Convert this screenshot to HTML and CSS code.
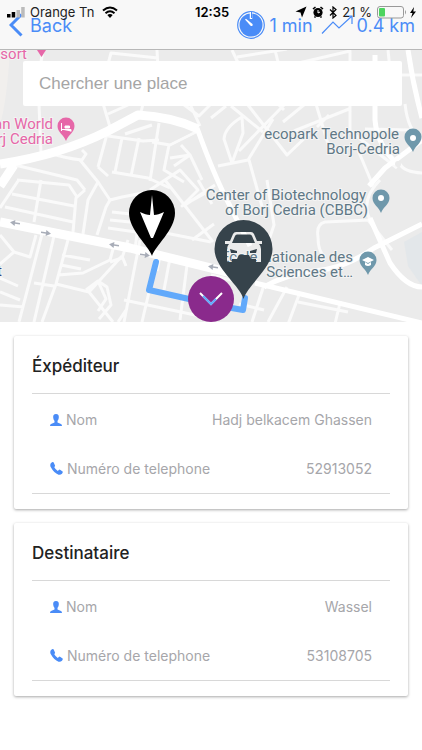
FILE: index.html
```html
<!DOCTYPE html>
<html lang="fr">
<head>
<meta charset="utf-8">
<meta name="viewport" content="width=device-width, initial-scale=1">
<title>Course</title>
<link rel="stylesheet" href="styles.css">
</head>
<body>
<header class="topbar">
  <div class="status">
    <div class="status-left">
      <svg width="18" height="11" viewBox="0 0 18 11"><path d="M0 7h3.500v3.500H0zM4.700 5h3.500v5.500H4.700z"/><path d="M9.500 3H13v7.500H9.500zM14.200 0h3.500v10.500h-3.500z" fill="#bbb"/></svg>
      <span>Orange Tn</span>
      <svg class="wifi" width="16" height="12" viewBox="0 0 16 12" fill="none" stroke="#000" stroke-width="2"><path d="M1 4.500Q8-1.500 15 4.500M3.500 7.200Q8 3.400 12.500 7.200"/><path d="M5.300 9Q8 6.800 10.700 9L8 12z" fill="#000" stroke="none"/></svg>
    </div>
    <strong class="clock">12:35</strong>
    <div class="status-right">
      <svg width="12" height="12" viewBox="0 0 12 12"><path d="M11.500 .5L7 11.500 5.500 6.500 .5 5.500z"/></svg>
      <svg width="12" height="12" viewBox="0 0 12 12"><circle cx="6" cy="6.500" r="4.600"/><path d="M1 3l2.500-2M11 3L8.500 1M2.500 11.500l1-1M9.500 11.500l-1-1" stroke="#000" stroke-width="1.600"/><path d="M6 4v3l2-1" fill="none" stroke="#fff"/></svg>
      <svg width="8" height="13" viewBox="0 0 8 13" fill="none" stroke="#000" stroke-width="1.200"><path d="M1 3.500l6 6L4 12V1l3 2.500-6 6"/></svg>
      <span>21 %</span>
      <svg width="40" height="13" viewBox="0 0 40 13"><rect x=".5" y=".5" width="26" height="11.500" rx="2.500" fill="none" stroke="#999"/><path d="M28 4q2 2.200 0 4.500z" fill="#999"/><rect x="2" y="2" width="6" height="8.500" rx="1" fill="#4cd45f"/><path d="M37 1l-4 6h2.500l-1.500 5 5-6.500h-2.700z"/></svg>
    </div>
  </div>
  <nav class="nav">
    <a class="back" href="#"><svg width="14" height="24" viewBox="0 0 14 24"><path d="M12.500 1.500L2 12l10.500 10.500" fill="none" stroke="#4a8cf7" stroke-width="3"/></svg>Back</a>
    <div class="trip">
      <svg width="28" height="28" viewBox="0 0 28 28"><circle cx="14" cy="14" r="13.300" fill="none" stroke="#4a8cf7" stroke-width="1.200"/><circle cx="14" cy="14" r="11.500" fill="#4a8cf7"/><path d="M14 1v7" stroke="#fff" stroke-width="2.500"/><path d="M14.500 1v6" stroke="#4a8cf7"/><path d="M8 8.500l1-.8 6.500 5.300q.8 2.200-1.700 2z" fill="#fff"/></svg>
      <span>1 min</span>
      <svg class="trend" width="32" height="20" viewBox="0 0 32 20" fill="none" stroke="#4a8cf7" stroke-width="1.200"><path d="M1 18.500L12 7l6 6L31 1M25 1h6v8"/></svg>
      <span>0.4 km</span>
    </div>
  </nav>
</header>

<main>
  <section class="map">
    <svg class="map-canvas" viewBox="0 50 422 272" preserveAspectRatio="xMidYMid slice">
      <defs>
        <path id="pin" d="M0 0C-2-6-8.500-8.500-8.500-15A8.500 8.500 0 0 1 8.500-15C8.500-8.500 2-6 0 0z"/>
        <path id="arrow" d="M-5-.7h5V-3l5 3-5 3V.7h-5z" fill="#a8adb8"/>
        <!-- the car is cut out of its pin, the map shows through -->
        <mask id="car">
          <rect x="210" y="215" width="70" height="90" fill="#fff"/>
          <path d="M225 241h5l3-7q1-2 3-2h15q2 0 3 2l3 7h5v3h-3q2 2 2 5v13h-5v-3h-24v3h-5v-13q0-3 2-5h-4z" fill="#000"/>
          <path d="M232 243l3-7q.5-1.500 2-1.500h13q1.500 0 2 1.500l3 7zM230 249l7 2v2h-6zM257 249l-7 2v2h6zM237 259l2-4h10l2 4z" fill="#fff"/>
        </mask>
      </defs>
      <rect y="50" width="422" height="273" fill="#ebebeb"/>
      <path d="M0 50h10q-3 50-10 75z" fill="#f1efed"/>
      <path d="M422 232l-18 10 4 24 14 20z" fill="#e3e7ea"/>
      <g class="roads minor">
        <path d="M43 50L38 80 41 153M107 68l4-15 47 5M157 50l1 20M102 100l8 27M143 104l-3 12M108 114l20-9M183 104l16 12 12-12M190 104l10 22"/>
        <path d="M125 134l27-9M107 134l-9 33M82 150l4 4-4 6q-18-2-32-7M159 123l-9 58M122 138l-7 34M139 138l-8 38M108 136l35 5 16-1M98 167l10 9M112 172l36 6 22 10"/>
        <path d="M169 145l-5 25 20 12M170 158l20-3-9-10M174 166l16-11 12 25M152 142l18 3 28-14"/>
        <path d="M15 165l62 15 8 10M0 184l13-17M17 180l52 5 8 12M0 208l18-27M12 194l62 12M5 207l68 15M41 180l-7 42M85 190l-9 8-3 34M80 160l18 22-10 18-5 34"/>
        <path d="M98 182l12 18 12-3 26-5M110 200l-4 7-9 28M112 212l28 3M110 220l30 3M108 228l28 4M141 200l-6 50"/>
        <path d="M0 235l14 17 16 5 6-22M14 252L0 264M42 234L19 322M54 236L34 322M68 240l-12 44-14 38M34 283l20 3M56 284l33 8 24 30M62 255l28 5M61 265l20 4M58 275l25-2 27-13 5-18M110 262l12-4 6-18M122 256l4 10M0 278l18 8M0 292l20 8M0 305l24 2"/>
        <path d="M140 240l-16 82M124 300l90 19M122 256l-33 36M98 281l8 18-8 12M86 290l12-9 9 6 4 18-12 14M118 322l8-12M149 292l-7 30M170 258l-6 32M160 256l-3 15M187 265l-7 55M140 228l71 14"/>
        <path d="M165 180l48 62M150 190l30-20 18 20-16 16 29-16M192 240l22-16M185 205l30-20M198 180l14 24"/>
        <path d="M232 50l8 17M237 57l50-8M275 50l5 20M290 65l60-14v12M231 106l32 26M248 105l39 50 22-21M285 104l-46 47M305 104l-22 18M316 104l15 50M349 109l-55 22M317 127l12-12M350 104v30M211 118l15-12M278 104l6 6"/>
        <path d="M242 117q-17 10-18 22l8 24 11-30zM218 166l30-6 25-41M249 160l14 50M358 150l16 38M349 130l48 38M411 130l-46-1M405 104q3 28 17 35M401 75h21M388 50l3 30M400 164q4 8 22 9"/>
        <path d="M267 180l7 45-5 15M370 220l-45 2q-9 2-7 15 0 15 7 20M370 220q-10-20 10-40M264 285l-12 37M287 287l-19 35M299 295l-12 32M340 303l-6 25M298 302l50 10M264 310l-25-6M340 303l82 20M211 275l40 10M392 250l-24-30"/>
      </g>
      <g class="roads medium">
        <path d="M197 128q18 50 33 78l20 40M375 55v65q2 25 23 45M422 140l-37 28-16 18M408 50q5 35 14 68M370 218l20 45q16 24 32 24M264 287q20-12 50-16 30-2 60-23l48-24M255 283l167 40"/>
      </g>
      <path class="roads large" d="M0 164q60-9 108-33l30-16q35 2 60 14M0 186l14-21M0 222l130 26 125 31"/>
      <circle cx="398" cy="164" r="3" fill="#ebebeb"/>
      <use href="#arrow" transform="translate(15 223) rotate(188)"/><use href="#arrow" transform="translate(46 233) rotate(8)"/><use href="#arrow" transform="translate(114 245) rotate(188)"/><use href="#arrow" transform="translate(145 255) rotate(8)"/><use href="#arrow" transform="translate(213 267) rotate(188)"/>
      <path d="M156 262l-7 28 40 9 37 8 17 3 2-12" fill="none" stroke="#61a9fb" stroke-width="6" stroke-linecap="round" stroke-linejoin="round"/>

      <g class="place hotel" text-anchor="end">
        <text x="27" y="59">Resort</text><text x="53" y="129">Dan World</text><text x="53" y="144">Borj Cedria</text>
        <path d="M37 50h9l-4.500 7z"/>
        <use href="#pin" x="66" y="141"/>
        <path d="M61.500 123v8M61.500 129.500h9.500v2M65 126h4.500v2H65z" stroke="#fff" fill="#fff"/>
      </g>
      <g class="place" text-anchor="end">
        <text x="399" y="139">ecopark Technopole</text><text x="400" y="154">Borj-Cedria</text>
        <text x="366" y="200">Center of Biotechnology</text><text x="368" y="215">of Borj Cedria (CBBC)</text>
        <text x="353" y="262">École Nationale des</text><text x="353" y="277">Sciences et…</text>
        <text x="2" y="276" fill="#39427a">t</text>
        <g fill="#6f98ab"><use href="#pin" x="413" y="152"/><use href="#pin" x="381" y="213"/><use href="#pin" x="368" y="275"/></g>
        <g fill="#fff"><circle cx="413" cy="138" r="3"/><circle cx="381" cy="198" r="3"/><path d="M362 260l6-3 6 3-6 3zM365 262v3q3 2 6 0v-3l-3 2z"/></g>
      </g>

      <path d="M152 256c-3-10-23-26-23-43a23 23 0 0 1 46 0c0 17-20 33-23 43z"/>
      <path d="M152 195l2 20q4 0 10-3l-11 26h-2l-11-26q6 3 10 3z" fill="#fff"/>

      <path mask="url(#car)" fill="#36434b" d="M243.500 299c-4-14-29-31-29-50a29 29 0 0 1 58 0c0 19-25 36-29 50z"/>
    </svg>
    <label class="search"><span class="sr-only">Chercher une place</span><input type="text" placeholder="Chercher une place"></label>
    <button class="toggle" aria-label="Afficher la carte"><svg width="24" height="14" viewBox="0 0 24 14" fill="none" stroke="#fff" stroke-width="2"><path d="M1 1l11 11L23 1"/><path d="M4 4l8 8 5-5" stroke="#61a9fb"/></svg></button>
  </section>

  <section class="card">
    <h2>Éxpéditeur</h2>
    <dl>
      <div><dt><svg width="12" height="12" viewBox="0 0 12 12"><path d="M6 0C3.700 0 3 1.500 3.200 3.500 3.400 5.500 4 6 4.500 7v1.500L1 10Q0 10.500 0 12h12q0-1.500-1-2L7.500 8.500V7c.5-1 1.100-1.500 1.300-3.500C9 1.500 8.300 0 6 0z"/></svg>Nom</dt><dd>Hadj belkacem Ghassen</dd></div>
      <div><dt><svg width="13" height="13" viewBox="0 0 13 13"><path d="M2.500 0L1 1Q-.5 3 1 5.500 4 11 8.500 12.700q2 .5 3.500-1l.7-1.200q.2-.8-.4-1.200L10 7.700q-.7-.3-1.200.2l-1 1Q5.500 7.500 4.300 5.200l.6-1q.3-.5 0-1L3.700.6Q3.200-.2 2.500 0z"/></svg>Numéro de telephone</dt><dd>52913052</dd></div>
    </dl>
  </section>

  <section class="card">
    <h2>Destinataire</h2>
    <dl>
      <div><dt><svg width="12" height="12" viewBox="0 0 12 12"><path d="M6 0C3.700 0 3 1.500 3.200 3.500 3.400 5.500 4 6 4.500 7v1.500L1 10Q0 10.500 0 12h12q0-1.500-1-2L7.500 8.500V7c.5-1 1.100-1.500 1.300-3.500C9 1.500 8.300 0 6 0z"/></svg>Nom</dt><dd>Wassel</dd></div>
      <div><dt><svg width="13" height="13" viewBox="0 0 13 13"><path d="M2.500 0L1 1Q-.5 3 1 5.500 4 11 8.500 12.700q2 .5 3.500-1l.7-1.200q.2-.8-.4-1.200L10 7.700q-.7-.3-1.200.2l-1 1Q5.500 7.500 4.300 5.200l.6-1q.3-.5 0-1L3.700.6Q3.200-.2 2.500 0z"/></svg>Numéro de telephone</dt><dd>53108705</dd></div>
    </dl>
  </section>
</main>
</body>
</html>
```
FILE: styles.css
```css
* {box-sizing:border-box;}
body {margin:0; min-height:100vh; background:#fff; color:#222; font-family:Inter,"Liberation Sans",sans-serif;}
svg {display:block; flex:none;}
.sr-only {position:absolute; width:1px; height:1px; overflow:hidden; clip-path:inset(50%);}

/* top bar: the status line lies over the navigation */
.topbar {position:relative; height:50px; background:#f8f8f8; border-bottom:1px solid #b8b8b8;}
.status {
position:absolute;
top:0;
left:0;
right:0;
z-index:1;
display:grid;
grid-template-columns:1fr auto 1fr;
align-items:center;
height:24px;
padding:0 5px 0 7px;
font-size:13px;
color:#222;
pointer-events:none;
}
.status-left, .status-right {display:flex; align-items:center; gap:5px;}
.status-right {justify-content:flex-end;}
.wifi {margin-left:3px;}
.clock {font-weight:600; color:#000;}
.nav {display:flex; justify-content:space-between; align-items:center; height:50px; padding:0 7px 0 9px; font-size:18px; color:#4a8cf7;}
.back {display:flex; align-items:center; gap:7px; color:#4a8cf7; text-decoration:none;}
.trip {display:flex; align-items:center; gap:4px;}
.trend {margin-left:4px;}

/* map */
.map {position:relative; padding:11px 20px 0 23px; height:272px;}
.map-canvas {position:absolute; top:0; left:0; width:100%; height:100%;}
.roads {fill:none; stroke:#fff; stroke-linejoin:round;}
.minor {stroke:#fafafa; stroke-width:3;}
.medium {stroke-width:5;}
.large {stroke-width:9;}
.place {font:15px Roboto,sans-serif; fill:#607886;}
.place text {stroke:#f4f4f4; stroke-width:2px; paint-order:stroke;}
.hotel {fill:#e667a8;}
.search {position:relative; display:block;}
.search input {
display:block;
width:100%;
height:45px;
padding:0 16px;
border:0;
border-radius:2px;
background:#fff;
color:#333;
font:17px "Liberation Sans",sans-serif;
}
.search input::placeholder {color:#a5a5a5; opacity:1;}
.toggle {
position:absolute;
bottom:0;
left:50%;
display:grid;
place-items:center;
width:46px;
height:46px;
margin-left:-23px;
padding:0;
border:0;
border-radius:50%;
background:#8a2a8c;
}

/* contact cards */
.card {
margin:14px 14px 0;
padding:0 18px 15px;
border-radius:2px;
background:#fff;
box-shadow:0 1px 3px rgba(0,0,0,.35);
}
.card h2 {margin:0; height:58px; border-bottom:1px solid #d8d8d8; font-size:17px; font-weight:500; line-height:60px;}
.card dl {margin:0; padding:1px 18px 0; border-bottom:1px solid #d8d8d8;}
.card dl div {display:flex; justify-content:space-between; align-items:center; height:49px; font-size:14px; color:#a6a6aa;}
.card dt {display:flex; align-items:center; gap:4px;}
.card dt svg {fill:#4a8cf7;}
.card dd {margin:0;}
```
